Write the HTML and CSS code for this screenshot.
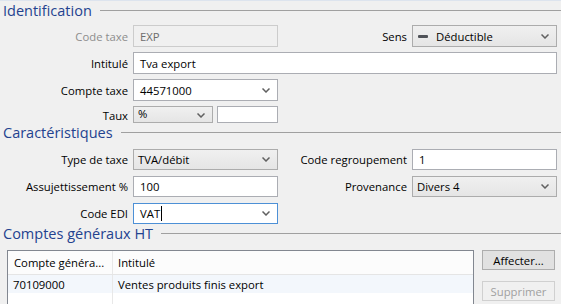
FILE: index.html
```html
<!DOCTYPE html>
<html>
<head>
    <meta charset="UTF-8">
    <title>Code taxe</title>
    <link rel="stylesheet" href="styles.css">
</head>
<body>
    <div class="window">
        <!-- Identification -->
        <div class="group-title"><span>Identification</span></div>
        <div class="form-grid ident">
            <label class="lbl disabled">Code taxe</label>
            <div class="field off">EXP</div>
            <label class="lbl">Sens</label>
            <div class="combo list">
                <span class="dash"></span><span class="sens-text">Déductible</span>
                <svg class="chev" width="8" height="5" viewBox="0 0 8 5"><path d="M0.5 0.5 L4 4 L7.5 0.5" fill="none" stroke="#606060" stroke-width="1.5"/></svg>
            </div>

            <label class="lbl">Intitulé</label>
            <div class="field wide">Tva export</div>

            <label class="lbl">Compte taxe</label>
            <div class="combo">
                <span>44571000</span>
                <svg class="chev" width="8" height="5" viewBox="0 0 8 5"><path d="M0.5 0.5 L4 4 L7.5 0.5" fill="none" stroke="#606060" stroke-width="1.5"/></svg>
            </div>
            <div></div><div></div>

            <label class="lbl taux-lbl">Taux</label>
            <div class="taux">
                <div class="combo list small">
                    <span>%</span>
                    <svg class="chev" width="8" height="5" viewBox="0 0 8 5"><path d="M0.5 0.5 L4 4 L7.5 0.5" fill="none" stroke="#606060" stroke-width="1.5"/></svg>
                </div>
                <div class="field"></div>
            </div>
        </div>

        <!-- Caractéristiques -->
        <div class="group-title"><span>Caractéristiques</span></div>
        <div class="form-grid carac">
            <label class="lbl">Type de taxe</label>
            <div class="combo list">
                <span>TVA/débit</span>
                <svg class="chev" width="8" height="5" viewBox="0 0 8 5"><path d="M0.5 0.5 L4 4 L7.5 0.5" fill="none" stroke="#606060" stroke-width="1.5"/></svg>
            </div>
            <label class="lbl">Code regroupement</label>
            <div class="field">1</div>

            <label class="lbl">Assujettissement %</label>
            <div class="field">100</div>
            <label class="lbl">Provenance</label>
            <div class="combo list">
                <span>Divers 4</span>
                <svg class="chev" width="8" height="5" viewBox="0 0 8 5"><path d="M0.5 0.5 L4 4 L7.5 0.5" fill="none" stroke="#606060" stroke-width="1.5"/></svg>
            </div>

            <label class="lbl">Code EDI</label>
            <div class="combo focus">
                <span>VAT<i class="caret"></i></span>
                <svg class="chev" width="8" height="5" viewBox="0 0 8 5"><path d="M0.5 0.5 L4 4 L7.5 0.5" fill="none" stroke="#606060" stroke-width="1.5"/></svg>
            </div>
        </div>

        <!-- Comptes généraux HT -->
        <div class="group-title"><span>Comptes généraux HT</span></div>
        <div class="comptes">
            <div class="grid">
                <div class="grid-head">
                    <div class="col-a">Compte généra...</div>
                    <div class="col-b">Intitulé</div>
                </div>
                <div class="grid-row">
                    <div class="col-a">70109000</div>
                    <div class="col-b">Ventes produits finis export</div>
                </div>
                <div class="grid-empty">
                    <div class="col-a"></div>
                    <div class="col-b"></div>
                </div>
            </div>
            <div class="actions">
                <button class="btn">Affecter...</button>
                <button class="btn" disabled>Supprimer</button>
            </div>
        </div>
    </div>
</body>
</html>
```

FILE: styles.css
```css
/* page */
body {
    margin: 0;
    background-color: #f0f0f0;
    font-family: 'Segoe UI', 'Open Sans', sans-serif;
    font-size: 11.3px;
    color: #000;
    overflow: hidden;
}

.window {
    border-top: 1px solid #dde4ee;
    height: 303px;
    overflow: hidden;
}

/* titres de groupe */
.group-title {
    display: flex;
    align-items: center;
    height: 19px;
    padding-left: 3px;
}

.group-title span {
    font-size: 14.5px;
    color: #23428f;
    white-space: nowrap;
}

.group-title::after {
    content: '';
    flex: 1;
    height: 1px;
    margin-left: 8px;
    background-color: #a0a0a0;
}

/* grilles de formulaire */
.form-grid {
    display: grid;
    grid-template-columns: 133px 145px 134px 145px;
    align-items: center;
}

.ident {
    margin-top: 5px;
    grid-template-rows: 22px 22px 22px 17px;
    row-gap: 5px;
}

.carac {
    margin-top: 7px;
    grid-auto-rows: 21px;
    row-gap: 6px;
}

.lbl {
    text-align: right;
    padding-right: 5px;
    white-space: nowrap;
}

.lbl.disabled {
    color: #8d8d8d;
}

.lbl.taux-lbl {
    align-self: end;
    line-height: 14px;
}

/* champs */
.field,
.combo {
    box-sizing: border-box;
    height: 100%;
    border: 1px solid #abadb3;
    background-color: #fff;
    padding: 0 6px;
    display: flex;
    align-items: center;
    white-space: nowrap;
}

.field.off {
    background-color: #f0f0f0;
    border-color: #cccccc;
    color: #6d6d6d;
}

.field.wide {
    grid-column: 2 / 5;
}

.combo {
    justify-content: space-between;
    padding-right: 7px;
}

.combo.list {
    background: linear-gradient(#f0f0f0, #e5e5e5);
    border-color: #acacac;
    padding-left: 4px;
}

.combo.focus {
    border-color: #4d90d6;
}

.combo.focus span {
    display: flex;
    align-items: center;
}

.caret {
    display: inline-block;
    width: 1px;
    height: 15px;
    margin-left: 1px;
    background-color: #000;
}

.dash {
    width: 10px;
    height: 3px;
    background-color: #4f5258;
    border-radius: 1px;
    margin-left: 1px;
}

.sens-text {
    flex: 1;
    margin-left: 8px;
}

.chev {
    flex-shrink: 0;
}

.taux {
    display: flex;
    gap: 4px;
    height: 100%;
}

.taux .combo,
.taux .field {
    align-items: flex-end;
    padding-bottom: 1px;
    line-height: 14px;
}

.taux .combo .chev {
    align-self: center;
    margin-top: 3px;
}

.taux .small {
    width: 80px;
}

.taux .field {
    flex: 1;
}

/* comptes généraux */
.comptes {
    display: flex;
    margin-top: 7px;
    padding-left: 7px;
    gap: 8px;
}

.grid {
    width: 467px;
    height: 70px;
    box-sizing: border-box;
    border: 1px solid #828790;
    background-color: #fff;
}

.grid-head,
.grid-row,
.grid-empty {
    display: flex;
}

.grid-head {
    height: 23px;
    border-bottom: 1px solid #e5e5e5;
    background-color: #fcfcfc;
    align-items: center;
}

.grid-row {
    height: 18px;
    background-color: #f3f7fc;
    align-items: center;
}

.grid-empty {
    height: 30px;
}

.col-a {
    width: 98px;
    padding-left: 6px;
    height: 100%;
    display: flex;
    align-items: center;
    border-right: 1px solid #e8e8e8;
    white-space: nowrap;
}

.col-b {
    padding-left: 5px;
    height: 100%;
    display: flex;
    align-items: center;
    white-space: nowrap;
}

.grid-row .col-a {
    padding-left: 5px;
    width: 99px;
}

.actions {
    display: flex;
    flex-direction: column;
    gap: 11px;
}

.btn {
    width: 73px;
    height: 20px;
    padding: 0;
    font-family: inherit;
    font-size: 11.3px;
    color: #000;
    background-color: #e1e1e1;
    border: 1px solid #adadad;
}

.btn:disabled {
    color: #a0a0a0;
    background-color: #f0f0f0;
    border-color: #d0d0d0;
}
```
